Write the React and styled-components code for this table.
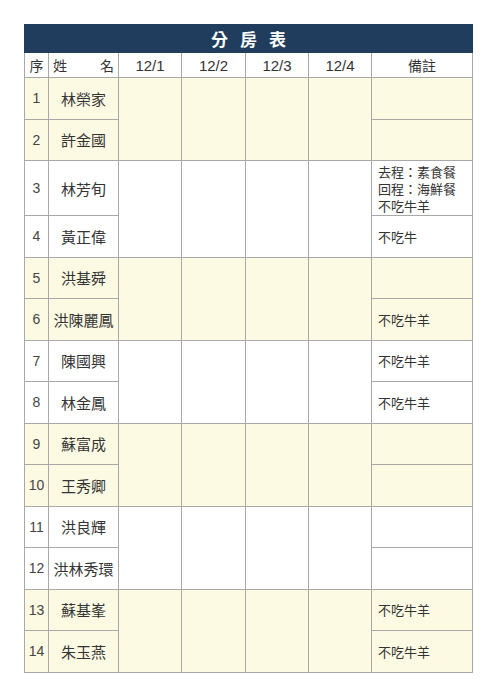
import React from "react";
import styled, { createGlobalStyle } from "styled-components";

const Global = createGlobalStyle`
  html, body { margin: 0; padding: 0; background: #fff; }
  body { font-family: "Liberation Sans", "Noto Sans CJK TC", sans-serif; color: #333; }
`;

const Page = styled.div`
  padding: 24px 0 0 24px;
`;

const Table = styled.table`
  border-collapse: collapse;
  table-layout: fixed;
  width: 448px;
`;

const Col = styled.col`
  width: ${(p) => p.$w}px;
`;

const TitleCell = styled.th`
  background: #213d5e;
  color: #fff;
  height: 27px;
  padding: 0;
  font-family: "Noto Sans CJK TC", sans-serif;
  font-size: 17px;
  font-weight: 700;
  letter-spacing: 12px;
  text-indent: 12px;
  border: 1px solid #213d5e;
`;

const Head = styled.th`
  height: 24px;
  padding: 0;
  font-weight: 400;
  font-size: ${(p) => (p.$cjk ? "14px" : "15px")};
  font-family: ${(p) =>
    p.$cjk
      ? '"Noto Sans CJK TC", sans-serif'
      : '"Liberation Sans", "Noto Sans CJK TC", sans-serif'};
  border: 1px solid #a8a8a8;
  background: #fff;
  color: #333;
`;

const NameHead = styled(Head)`
  padding: 0 4px;
`;

const NameHeadInner = styled.div`
  display: flex;
  justify-content: space-between;
`;

const Cell = styled.td`
  border: 1px solid #a8a8a8;
  padding: 0;
  background: ${(p) => (p.$hl ? "#fdfae3" : "#fff")};
  height: ${(p) => (p.$tall ? "54px" : "40.5px")};
`;

const Seq = styled(Cell)`
  text-align: center;
  font-size: 14px;
  font-family: "Liberation Sans", sans-serif;
  color: #444;
`;

const Name = styled(Cell)`
  text-align: center;
  font-size: 15px;
  font-family: "Noto Sans CJK TC", sans-serif;
  white-space: nowrap;
`;

const Note = styled(Cell)`
  padding: 0 6px;
  font-size: 13px;
  line-height: 17px;
  font-family: "Noto Sans CJK TC", sans-serif;
`;

const NoteLine = styled.div`
  white-space: nowrap;
`;

const rows = [
  ["1", "林榮家", ""],
  ["2", "許金國", ""],
  ["3", "林芳旬", "去程：素食餐\n回程：海鮮餐\n不吃牛羊"],
  ["4", "黃正偉", "不吃牛"],
  ["5", "洪基舜", ""],
  ["6", "洪陳麗鳳", "不吃牛羊"],
  ["7", "陳國興", "不吃牛羊"],
  ["8", "林金鳳", "不吃牛羊"],
  ["9", "蘇富成", ""],
  ["10", "王秀卿", ""],
  ["11", "洪良輝", ""],
  ["12", "洪林秀環", ""],
  ["13", "蘇基峯", "不吃牛羊"],
  ["14", "朱玉燕", "不吃牛羊"],
];

const dates = ["12/1", "12/2", "12/3", "12/4"];
const widths = [24, 70, 63, 64, 63, 63, 101];

export default function App() {
  return (
    <>
      <Global />
      <Page>
        <Table>
          <colgroup>
            {widths.map((w, i) => (
              <Col key={i} $w={w} />
            ))}
          </colgroup>
          <thead>
            <tr>
              <TitleCell colSpan={7}>分房表</TitleCell>
            </tr>
            <tr>
              <Head $cjk>序</Head>
              <NameHead $cjk>
                <NameHeadInner>
                  <span>姓</span>
                  <span>名</span>
                </NameHeadInner>
              </NameHead>
              {dates.map((d) => (
                <Head key={d}>{d}</Head>
              ))}
              <Head $cjk>備註</Head>
            </tr>
          </thead>
          <tbody>
            {rows.map(([n, name, note], i) => {
              const hl = Math.floor(i / 2) % 2 === 0;
              const tall = i === 2;
              return (
                <tr key={n}>
                  <Seq $hl={hl} $tall={tall}>{n}</Seq>
                  <Name $hl={hl} $tall={tall}>{name}</Name>
                  {i % 2 === 0 &&
                    dates.map((d) => <Cell key={d} rowSpan={2} $hl={hl} />)}
                  <Note $hl={hl} $tall={tall}>
                    {note.split("\n").map((l, k) => (
                      <NoteLine key={k}>{l}</NoteLine>
                    ))}
                  </Note>
                </tr>
              );
            })}
          </tbody>
        </Table>
      </Page>
    </>
  );
}
